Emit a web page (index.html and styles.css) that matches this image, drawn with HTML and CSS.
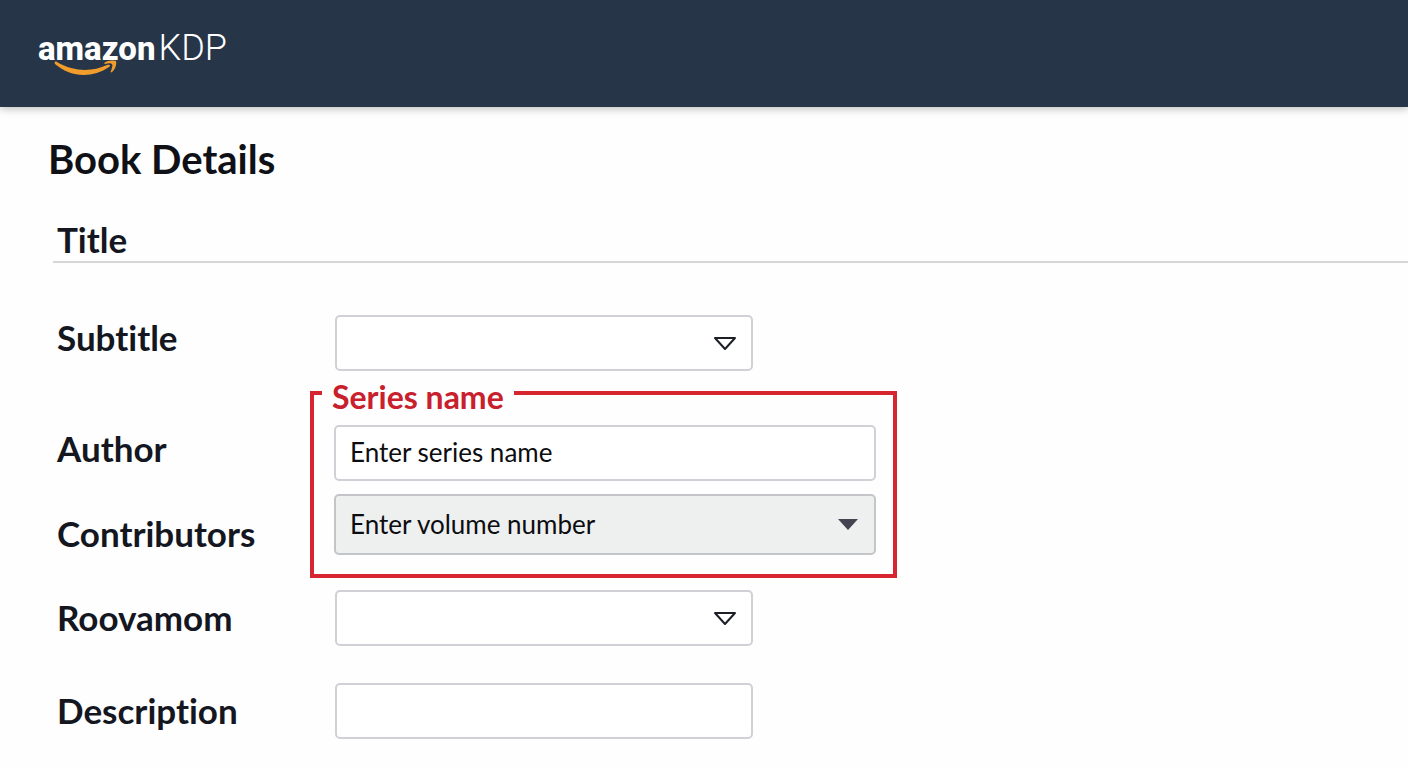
FILE: index.html
```
<!DOCTYPE html>
<html lang="en">
<head>
    <meta charset="UTF-8">
    <title>Amazon KDP - Book Details</title>
    <link rel="stylesheet" href="styles.css">
</head>
<body>
    <header class="header">
        <a class="logo" href="#">
            <span class="logo-amazon">amazon</span><span class="logo-kdp">KDP</span>
            <svg class="logo-smile" width="64" height="18" viewBox="0 0 64 18" fill="#f29d2b">
                <path d="M1 4 C0 2 1 1 3 2 C20 12 38 12 53 5 C56 4 57 6 55 7 C39 18 17 18 1 4 Z"/>
                <path d="M50 3 C53 0 60 0 62 1 C63 4 61 10 58 12 C57 13 56 12 57 11 C58 8 59 5 58 4 C57 3 54 3 51 4 Z"/>
            </svg>
        </a>
    </header>

    <main class="container">
        <h1>Book Details</h1>

        <form class="book-form">
            <h2 class="label title">Title</h2>

            <!-- Subtitle -->
            <div class="row row-top">
                <label class="label" for="subtitle">Subtitle</label>
                <div class="select">
                    <select class="field" id="subtitle"><option></option></select>
                    <svg class="arrow" width="24" height="16" viewBox="0 0 24 16">
                        <path d="M2 2 H22 L12 13 Z" fill="none" stroke="#1c1f26" stroke-width="2" stroke-linejoin="round"/>
                    </svg>
                </div>
            </div>

            <!-- Author, contributors and series -->
            <div class="row series-row">
                <div class="label-stack">
                    <label class="label" for="series">Author</label>
                    <label class="label" for="volume">Contributors</label>
                </div>
                <fieldset class="series">
                    <legend>Series name</legend>
                    <input class="field" type="text" id="series" placeholder="Enter series name">
                    <div class="select select-filled">
                        <select class="field" id="volume"><option>Enter volume number</option></select>
                        <svg class="arrow" width="20" height="12" viewBox="0 0 20 12">
                            <path d="M0 1 H20 L10 12 Z" fill="#42444f"/>
                        </svg>
                    </div>
                </fieldset>
            </div>

            <div class="row">
                <label class="label" for="roovamom">Roovamom</label>
                <div class="select">
                    <select class="field" id="roovamom"><option></option></select>
                    <svg class="arrow" width="24" height="16" viewBox="0 0 24 16">
                        <path d="M2 2 H22 L12 13 Z" fill="none" stroke="#1c1f26" stroke-width="2" stroke-linejoin="round"/>
                    </svg>
                </div>
            </div>

            <!-- Description -->
            <div class="row description-row">
                <label class="label" for="description">Description</label>
                <input class="field" type="text" id="description">
            </div>
        </form>
    </main>
</body>
</html>
```
FILE: styles.css
```
* {
    box-sizing: border-box;
}

body {
    margin: 0;
    font-family: Lato, "Open Sans", sans-serif;
    font-variant-ligatures: none;
    color: #14171f;
    background-color: #fefefe;
}

/* Header */
.header {
    height: 107px;
    padding: 24px 38px;
    background-color: #263648;
    box-shadow: 0 2px 8px rgba(0, 0, 0, 0.25);
}

.logo {
    position: relative;
    display: inline-flex;
    align-items: baseline;
    gap: 3px;
    color: white;
    font-family: Roboto, sans-serif;
    line-height: 48px;
    text-decoration: none;
}

.logo-amazon {
    font-size: 33px;
    font-weight: 800;
}

.logo-kdp {
    font-size: 36px;
    font-weight: 300;
}

.logo-smile {
    position: absolute;
    left: 16px;
    top: 36px;
}

/* Page */
.container {
    padding: 28px 0 28px 48px;
}

h1 {
    margin: 0;
    font-size: 40px;
    line-height: 48px;
    color: #0f1117;
}

.book-form {
    margin: 34px 0 0 5px;
}

.label {
    padding-left: 4px;
    font-size: 35px;
    font-weight: 700;
    line-height: 44px;
}

.title {
    margin: 0 0 52px;
    border-bottom: 2px solid #d5d6d8;
}

.row {
    display: grid;
    grid-template-columns: 282px 1fr;
    align-items: center;
}

.row-top,
.series-row {
    align-items: start;
}

.series-row {
    margin: 4px 0 12px;
}

.description-row {
    margin-top: 37px;
}

.row > .label {
    padding-bottom: 2px;
}

.label-stack {
    display: flex;
    flex-direction: column;
    gap: 41px;
    padding-top: 51px;
}

/* Fields */
.field {
    display: block;
    width: 418px;
    height: 56px;
    padding: 0 14px 2px;
    font-family: inherit;
    font-size: 26px;
    color: #0c0d10;
    background-color: white;
    border: 2px solid #d0d1d6;
    border-radius: 5px;
    appearance: none;
}

.field::placeholder {
    color: #0c0d10;
    opacity: 1;
}

.select {
    position: relative;
    width: 418px;
}

.arrow {
    position: absolute;
    top: 21px;
    right: 16px;
    pointer-events: none;
}

/* Series box */
.series {
    width: 587px;
    margin: 0 0 0 -25px;
    padding: 14px 17px 19px 20px;
    border: 4px solid #d6252f;
}

.series legend {
    margin-left: -12px;
    padding: 8px 10px 0;
    font-size: 32px;
    font-weight: 700;
    line-height: 28px;
    color: #c8202c;
}

.series .field {
    width: 100%;
}

.select-filled {
    width: 100%;
    margin-top: 13px;
}

.select-filled .field {
    height: 61px;
    background-color: #eeefef;
    border-color: #c3c5c8;
}

.select-filled .arrow {
    top: 24px;
    right: 18px;
}
```
